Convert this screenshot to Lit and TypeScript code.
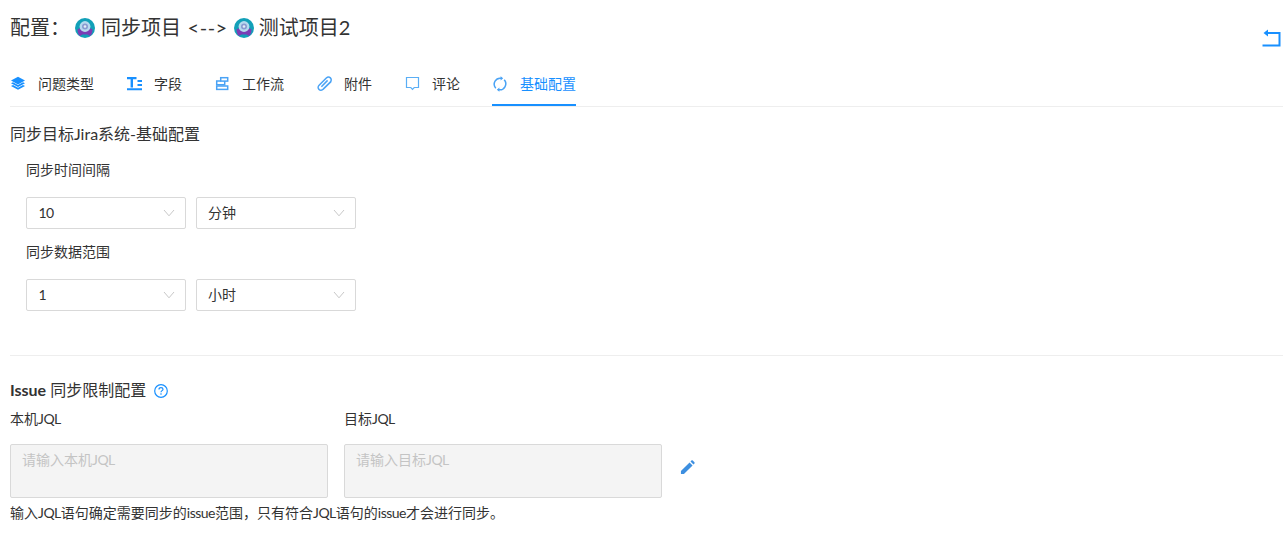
import { LitElement, html, css, svg } from "lit";
import { customElement } from "lit/decorators.js";

const avatar = html`<svg class="avatar" viewBox="0 0 20 20">
  <circle cx="10" cy="10" r="10" fill="#12a0b8"/>
  <path d="M2.5 11.5C4 9 16 9 17.5 11.5C17.5 15 16 17.5 15 18L12.5 16.5H7.5L5 18C4 17.5 2.5 15 2.5 11.5Z" fill="#7a3db5"/>
  <circle cx="10" cy="8.5" r="5.4" fill="#b5d9ee"/>
  <circle cx="10" cy="8.5" r="3" fill="#8a9bd0"/>
  <circle cx="10" cy="8.5" r="1.3" fill="#e4eef7"/>
</svg>`;

const chevron = html`<svg class="chev" viewBox="0 0 12 8"><path d="M1 1L6 6.8L11 1" fill="none" stroke="#c8c8c8" stroke-width="1"/></svg>`;

const tabs = [
  { label: "问题类型", icon: svg`<path d="M8 .8L15 4.6L8 8.4L1 4.6Z" fill="#1890ff"/><path d="M1 7.3L3 6.2L8 9L13 6.2L15 7.3L8 11.1Z" fill="#1890ff"/><path d="M1 10L3 8.9L8 11.7L13 8.9L15 10L8 13.8Z" fill="#1890ff"/>` },
  { label: "字段", icon: svg`<path d="M1 1H10.5V3.2H7V11.5H4.6V3.2H1Z" fill="#1890ff"/><path d="M11.5 4H16V6H11.5ZM11.5 8H16V10H11.5ZM1 12.2H16V14.2H1Z" fill="#1890ff"/>` },
  { label: "工作流", icon: svg`<g fill="none" stroke="#4aa3f5" stroke-width="1.5"><rect x="6.7" y="1.7" width="7" height="3.4"/><path d="M6.7 5.1H2.7V8.7H10.7V5.1"/><rect x="2.7" y="10" width="11" height="3.4"/></g>` },
  { label: "附件", icon: svg`<path d="M15 5.6L7.2 13.3C6 14.5 4.1 14.6 3 13.4C1.8 12.2 1.9 10.4 3.1 9.2L10.3 2C11.6 .8 13.4 .9 14.4 1.9C15.5 3 15.5 4.8 14.3 6L7.2 13M11.6 4.4L5.4 10.7" fill="none" stroke="#4aa3f5" stroke-width="1.5" stroke-linejoin="round"/>` },
  { label: "评论", icon: svg`<path d="M2.5 1.5H14.5V11.5H10.2L8.5 13.3L6.8 11.5H2.5Z" fill="none" stroke="#5aaef5" stroke-width="1.2"/>` },
  { label: "基础配置", active: true, icon: svg`<g fill="none" stroke="#4aa3f5" stroke-width="1.5"><path d="M9.4 2.3A6 6 0 0 0 3.8 12.2"/><path d="M6.6 13.7A6 6 0 0 0 12.2 3.8"/></g><path d="M8.6 .2V4.4L11.2 2.3Z M7.4 11.6V15.8L4.8 13.7Z" fill="#4aa3f5"/>` },
];

const jqlText = html`<span class="lat">JQL</span>`;
const issueText = html`<span class="lat">issue</span>`;

@customElement("app-root")
export class AppRoot extends LitElement {
  static styles = css`
    :host {
      display: block;
      width: 1288px;
      height: 544px;
      overflow: hidden;
      background: #fff;
      color: #333;
      font-family: "Lato", "Noto Sans CJK SC", sans-serif;
      font-size: 14px;
    }
    .page { padding: 0 5px 0 10px; display: flex; flex-direction: column; }
    .head { display: flex; align-items: flex-start; justify-content: space-between; height: 62px; }
    .title { display: flex; align-items: center; height: 56px; font-size: 20px; line-height: 28px; white-space: pre; }
    .title span { padding-bottom: 2px; }
    .title .colon { width: 65px; }
    .avatar { width: 20px; height: 20px; flex: none; }
    .title .gap { margin-left: 6px; }
    .title .gap.last { margin-left: 5px; }
    .title .arrow { margin: 0 6px 0 1px; letter-spacing: 0.5px; }
    .back { margin: 27px 0 0 0; width: 22px; height: 22px; }
    .tabs { display: flex; gap: 32px; height: 44px; border-bottom: 1px solid #eee; }
    .tab { display: flex; align-items: center; gap: 12px; height: 44px; margin-bottom: -1px; box-sizing: border-box; color: #333; border-bottom: 2px solid transparent; padding-top: 2px; line-height: 20px; }
    .tab svg { width: 16px; height: 16px; flex: none; }
    .tab.active { color: #1890ff; border-bottom-color: #1890ff; }
    h3 { margin: 0; font-weight: 400; font-size: 16px; line-height: 22px; color: #333; }
    .sec1 { margin-top: 16px; }
    .form { padding: 0 0 0 16px; }
    .flabel { line-height: 20px; margin-top: 15px; }
    .flabel.second { margin-top: 13px; }
    .selects { display: flex; gap: 10px; margin-top: 17px; }
    .select { width: 160px; height: 32px; box-sizing: border-box; border: 1px solid #d9d9d9; border-radius: 2px; display: flex; align-items: center; justify-content: space-between; padding: 0 10px 2px 11px; font-size: 14px; }
    .num { margin-left: 0.5px; letter-spacing: -0.5px; }
    .chev { width: 12px; height: 8px; margin-top: 2px; }
    hr { border: 0; border-top: 1px solid #eee; margin: 44px 0 0; }
    .issue { display: flex; align-items: center; gap: 8px; margin-top: 23px; font-size: 16px; line-height: 22px; }
    .issue .txt { padding-bottom: 2px; }
    .issue b { font-weight: 700; }
    .help { width: 14px; height: 14px; }
    .jql { display: flex; align-items: flex-start; gap: 16px; margin-top: 6px; }
    .jql .col { width: 318px; }
    .jql label { display: block; line-height: 20px; }
    .ta { height: 54px; box-sizing: border-box; margin-top: 15px; background: #f4f4f4; border: 1px solid #d9d9d9; border-radius: 2px; padding: 5px 11px; color: #c4c4c4; line-height: 20px; }
    .pen { width: 15px; height: 15px; margin: 51px 0 0 2px; }
    .tip { line-height: 20px; margin-top: 5px; }
    .lat { letter-spacing: -0.5px; }
  `;

  render() {
    return html`<div class="page">
      <div class="head">
        <div class="title"><span class="colon">配置：</span>${avatar}<span class="gap">同步项目</span><span class="arrow"> &lt;--&gt;</span>${avatar}<span class="gap last">测试项目2</span></div>
        <svg class="back" viewBox="0 0 22 22"><path d="M1.5 18.5H18.5V6H5" fill="none" stroke="#1890ff" stroke-width="2"/><path d="M7 2.5V9.5L2.5 6Z" fill="#1890ff"/></svg>
      </div>
      <div class="tabs">
        ${tabs.map((t) => html`<div class="tab ${t.active ? "active" : ""}"><svg viewBox="0 0 16 16">${t.icon}</svg><span>${t.label}</span></div>`)}
      </div>
      <h3 class="sec1">同步目标Jira系统-基础配置</h3>
      <div class="form">
        <div class="flabel">同步时间间隔</div>
        <div class="selects">
          <div class="select"><span class="num">10</span>${chevron}</div>
          <div class="select"><span>分钟</span>${chevron}</div>
        </div>
        <div class="flabel second">同步数据范围</div>
        <div class="selects">
          <div class="select"><span class="num">1</span>${chevron}</div>
          <div class="select"><span>小时</span>${chevron}</div>
        </div>
      </div>
      <hr />
      <div class="issue"><span class="txt"><b>Issue</b> 同步限制配置</span>
        <svg class="help" viewBox="0 0 14 14"><circle cx="7" cy="7" r="6.3" fill="none" stroke="#1890ff" stroke-width="1.2"/><path d="M5 5.4C5 4.2 5.9 3.6 7 3.6C8.1 3.6 9 4.3 9 5.3C9 6.6 7 6.7 7 8.2" fill="none" stroke="#1890ff" stroke-width="1.2"/><circle cx="7" cy="10" r="0.8" fill="#1890ff"/></svg>
      </div>
      <div class="jql">
        <div class="col"><label>本机${jqlText}</label><div class="ta">请输入本机${jqlText}</div></div>
        <div class="col"><label>目标${jqlText}</label><div class="ta">请输入目标${jqlText}</div></div>
        <svg class="pen" viewBox="0 0 16 16"><path d="M1 15V11.8L10.2 2.6L13.4 5.8L4.2 15Z M11.2 1.6L12.2 0.6C12.6 0.2 13.2 0.2 13.6 0.6L15.4 2.4C15.8 2.8 15.8 3.4 15.4 3.8L14.4 4.8Z" fill="#3d8fe0"/></svg>
      </div>
      <div class="tip">输入${jqlText}语句确定需要同步的${issueText}范围，只有符合${jqlText}语句的${issueText}才会进行同步。</div>
    </div>`;
  }
}
